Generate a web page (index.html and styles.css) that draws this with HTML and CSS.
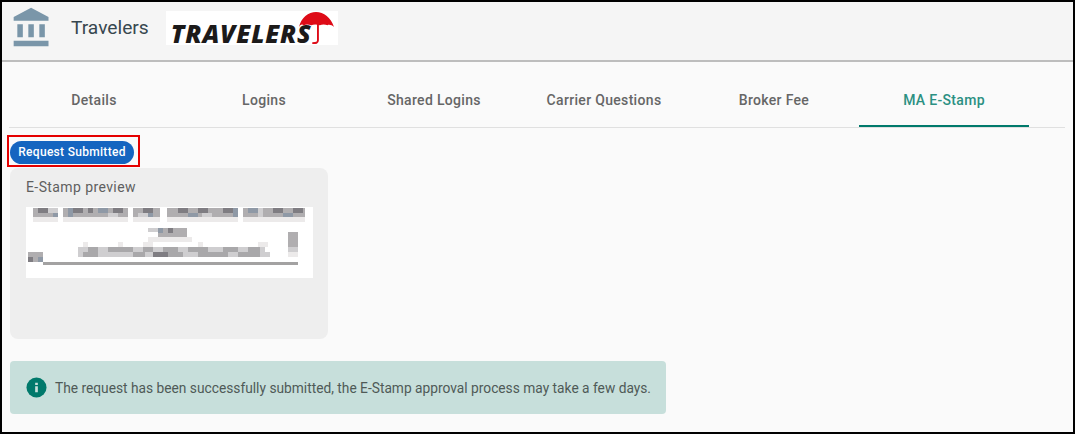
FILE: index.html
```html
<!DOCTYPE html>
<html lang="en">
<head>
    <meta charset="UTF-8">
    <meta name="viewport" content="width=device-width, initial-scale=1.0">
    <title>Travelers - MA E-Stamp</title>
    <link rel="stylesheet" href="styles.css">
</head>
<body>
    <div class="frame">
        <header class="header">
            <svg class="bank-icon" viewBox="0 0 24 24">
                <path d="M4 10v7h3v-7H4zm6 0v7h3v-7h-3zM2 22h19v-3H2v3zm14-12v7h3v-7h-3zm-4.5-9L2 6v2h19V6l-9.5-5z"/>
            </svg>
            <span class="carrier-name">Travelers</span>
            <div class="logo">
                <span class="logo-text">TRAVELERS</span>
                <svg class="logo-umbrella" viewBox="0 0 40 36">
                    <path class="canopy" d="M1 17C3 7 11 1 19 1s16 6 19 16c-2-2-5-3-7-2-2-1-6-1-8 0-3-1-7-1-9 0-3-1-6-1-8 0-2-1-3-1-5 2z"/>
                    <path class="handle" d="M21 13v18c0 3-2 3-6 3"/>
                </svg>
            </div>
        </header>

        <nav class="tabs">
            <a class="tab">Details</a>
            <a class="tab">Logins</a>
            <a class="tab">Shared Logins</a>
            <a class="tab">Carrier Questions</a>
            <a class="tab">Broker Fee</a>
            <a class="tab active">MA E-Stamp</a>
        </nav>

        <main class="content">
            <div class="status-mark">
                <span class="pill">Request Submitted</span>
            </div>

            <section class="preview">
                <h2 class="preview-title">E-Stamp preview</h2>
                <svg class="stamp" viewBox="0 0 287 71" shape-rendering="crispEdges">
                    <!-- blurred out stamp text -->
                    <path fill="#eceaea" d="M7 10h25v5H7zM37 10h65v5H37zM107 10h27v5h-27zM141 10h71v5h-71zM217 10h62v5h-62zM122 30h44v5h-44zM262 50h10v-5h-10zM57 35h5v5h-5zM92 35h5v5h-5zM117 35h10v5h-10zM172 35h5v5h-5zM232 35h10v5h-10z"/>
                    <path fill="#b0aeb0" d="M7 1h25v9H7zM37 1h65v9H37zM107 1h27v9h-27zM141 1h71v9h-71zM217 1h62v9h-62zM132 21h29v9h-29zM262 25h10v15h-10zM2 45h15v10H2z"/>
                    <path fill="#cfced0" d="M52 40h187v5H52zM52 45h192v5H52zM22 1h10v5H22zM82 6h10v4H82zM112 6h10v4h-10zM176 6h10v4h-10zM232 1h5v9h-5zM122 21h10v4h-10zM262 40h10v5h-10z"/>
                    <path fill="#a9a8aa" d="M62 40h10v5H62zM82 40h25v5H82zM117 40h10v5h-10zM137 40h15v5h-15zM162 40h20v5h-20zM197 40h15v5h-15zM222 40h12v5h-12zM57 45h15v5H57zM107 45h12v5h-12zM142 45h15v5h-15zM172 45h30v5h-30zM212 45h22v5h-22z"/>
                    <path fill="#7f7d82" d="M12 1h10v5H12zM47 1h10v5H47zM62 1h5v5h-5zM87 1h10v5H87zM117 1h10v5h-10zM152 1h10v5h-10zM172 1h10v5h-10zM197 1h10v5h-10zM247 1h10v5h-10zM267 1h10v5h-10zM2 50h5v5H2zM127 45h15v5h-15zM142 21h5v5h-5z"/>
                    <path fill="#8f99a6" d="M27 6h5v4h-5zM42 1h5v9h-5zM72 1h10v5H72zM122 6h5v4h-5zM162 6h10v4h-10zM207 1h5v9h-5zM222 1h10v5h-10zM257 6h10v4h-10zM132 21h5v5h-5zM12 50h5v5h-5z"/>
                    <path fill="#a3a2a2" d="M17 55h255v3H17z"/>
                </svg>
            </section>

            <div class="alert">
                <svg class="alert-icon" viewBox="0 0 22 22">
                    <circle cx="11" cy="11" r="10.5"/>
                    <path class="alert-i" d="M9.6 9.6h2.8V16H9.6zM9.6 6h2.8v2.4H9.6z"/>
                </svg>
                <span>The request has been successfully submitted, the E-Stamp approval process may take a few days.</span>
            </div>
        </main>
    </div>
</body>
</html>
```

FILE: styles.css
```css
* {
    box-sizing: border-box;
}
html, body {
    margin: 0;
    height: 100%;
}
body {
    font-family: Roboto, "Liberation Sans", sans-serif;
    background-color: #fff;
}
.frame {
    height: 434px;
    border: 2px solid #000;
    background-color: #fafafa;
    overflow: hidden;
}

/* top bar */
.header {
    display: flex;
    align-items: center;
    height: 60px;
    background-color: #f5f5f5;
    border-bottom: 2px solid #bdbdbd;
    padding-left: 8px;
}
.bank-icon {
    width: 44px;
    height: 44px;
    margin-top: -6px;
    fill: #7a96a9;
    flex-shrink: 0;
}
.carrier-name {
    margin-left: 17px;
    margin-top: -7px;
    font-size: 19.2px;
    color: #37474f;
}
.logo {
    display: flex;
    align-items: flex-end;
    width: 172px;
    height: 34px;
    margin-left: 17px;
    margin-top: -7px;
    padding-left: 5px;
    padding-bottom: 0;
    background-color: #fff;
    position: relative;
}
.logo-text {
    font-family: "Open Sans", "Liberation Sans", sans-serif;
    font-size: 25px;
    font-weight: 800;
    font-style: italic;
    line-height: 24px;
    letter-spacing: 0.8px;
    color: #1c1a1a;
}
.logo-umbrella {
    position: absolute;
    right: 2px;
    top: 0;
    width: 38px;
    height: 34px;
}
.canopy {
    fill: #de0b17;
}
.handle {
    fill: none;
    stroke: #de0b17;
    stroke-width: 2;
}

/* tabs */
.tabs {
    display: flex;
    height: 66px;
    margin-left: 7px;
    border-bottom: 1px solid #e0e0e0;
    margin-right: 8px;
}
.tab {
    display: flex;
    align-items: center;
    justify-content: center;
    width: 170px;
    padding-top: 13px;
    font-size: 14px;
    font-weight: 500;
    letter-spacing: 0.32px;
    color: #666;
    border-bottom: 2px solid transparent;
}
.tab.active {
    color: #2b9082;
    border-bottom-color: #00796b;
}

/* body */
.content {
    padding: 7px 0 0 8px;
}
.status-mark {
    display: flex;
    align-items: center;
    width: 133px;
    height: 32px;
    margin-left: -3px;
    padding-left: 1px;
    padding-top: 2px;
    border: 2px solid #e50000;
}
.pill {
    display: flex;
    align-items: center;
    justify-content: center;
    width: 124px;
    height: 23px;
    border-radius: 12px;
    background-color: #1565c0;
    color: #fff;
    font-size: 12px;
    font-weight: 500;
    letter-spacing: 0.3px;
}
.preview {
    width: 318px;
    height: 171px;
    margin-top: 1px;
    padding: 11px 16px;
    background-color: #eeeeee;
    border-radius: 8px;
}
.preview-title {
    margin: 0;
    font-size: 14px;
    font-weight: 400;
    letter-spacing: 0.4px;
    line-height: 16px;
    color: #5f5f5f;
}
.stamp {
    display: block;
    width: 287px;
    height: 71px;
    margin-top: 12px;
    background-color: #fff;
    filter: blur(0.4px);
}
.alert {
    display: flex;
    align-items: center;
    gap: 8px;
    width: 656px;
    height: 53px;
    margin-top: 22px;
    padding-left: 16px;
    background-color: #c7dfdb;
    border-radius: 4px;
    font-size: 13.75px;
    color: #4f5a57;
}
.alert-icon {
    width: 21px;
    height: 21px;
    flex-shrink: 0;
    fill: #00796b;
}
.alert-i {
    fill: #c7dfdb;
}
```
